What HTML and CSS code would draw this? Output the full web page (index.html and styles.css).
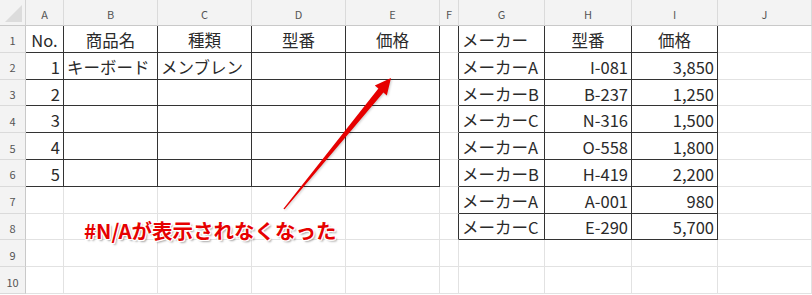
FILE: index.html
```html
<!DOCTYPE html>
<html lang="ja">
<head>
    <meta charset="UTF-8">
    <meta name="viewport" content="width=device-width, initial-scale=1.0">
    <title>商品リスト</title>
    <link rel="stylesheet" href="styles.css">
</head>
<body>
    <div class="wrap">
        <div class="sheet">
            <!-- 列見出し -->
            <div class="corner"></div>
            <div class="col-head">A</div>
            <div class="col-head">B</div>
            <div class="col-head">C</div>
            <div class="col-head">D</div>
            <div class="col-head">E</div>
            <div class="col-head">F</div>
            <div class="col-head">G</div>
            <div class="col-head">H</div>
            <div class="col-head">I</div>
            <div class="col-head">J</div>

            <!-- 1 -->
            <div class="row-head">1</div>
            <div class="cell dark mid">No.</div>
            <div class="cell dark mid">商品名</div>
            <div class="cell dark mid">種類</div>
            <div class="cell dark mid">型番</div>
            <div class="cell dark mid">価格</div>
            <div class="cell edge"></div>
            <div class="cell dark">メーカー</div>
            <div class="cell dark mid">型番</div>
            <div class="cell dark mid">価格</div>
            <div class="cell"></div>

            <!-- 2 -->
            <div class="row-head">2</div>
            <div class="cell dark num">1</div>
            <div class="cell dark">キーボード</div>
            <div class="cell dark">メンブレン</div>
            <div class="cell dark"></div>
            <div class="cell dark"></div>
            <div class="cell edge"></div>
            <div class="cell dark">メーカーA</div>
            <div class="cell dark num">I-081</div>
            <div class="cell dark num">3,850</div>
            <div class="cell"></div>

            <!-- 3 -->
            <div class="row-head">3</div>
            <div class="cell dark num">2</div>
            <div class="cell dark"></div>
            <div class="cell dark"></div>
            <div class="cell dark"></div>
            <div class="cell dark"></div>
            <div class="cell edge"></div>
            <div class="cell dark">メーカーB</div>
            <div class="cell dark num">B-237</div>
            <div class="cell dark num">1,250</div>
            <div class="cell"></div>

            <!-- 4 -->
            <div class="row-head">4</div>
            <div class="cell dark num">3</div>
            <div class="cell dark"></div>
            <div class="cell dark"></div>
            <div class="cell dark"></div>
            <div class="cell dark"></div>
            <div class="cell edge"></div>
            <div class="cell dark">メーカーC</div>
            <div class="cell dark num">N-316</div>
            <div class="cell dark num">1,500</div>
            <div class="cell"></div>

            <!-- 5 -->
            <div class="row-head">5</div>
            <div class="cell dark num">4</div>
            <div class="cell dark"></div>
            <div class="cell dark"></div>
            <div class="cell dark"></div>
            <div class="cell dark"></div>
            <div class="cell edge"></div>
            <div class="cell dark">メーカーA</div>
            <div class="cell dark num">O-558</div>
            <div class="cell dark num">1,800</div>
            <div class="cell"></div>

            <!-- 6 -->
            <div class="row-head">6</div>
            <div class="cell dark num">5</div>
            <div class="cell dark"></div>
            <div class="cell dark"></div>
            <div class="cell dark"></div>
            <div class="cell dark"></div>
            <div class="cell edge"></div>
            <div class="cell dark">メーカーB</div>
            <div class="cell dark num">H-419</div>
            <div class="cell dark num">2,200</div>
            <div class="cell"></div>

            <!-- 7 -->
            <div class="row-head">7</div>
            <div class="cell"></div>
            <div class="cell"></div>
            <div class="cell"></div>
            <div class="cell"></div>
            <div class="cell"></div>
            <div class="cell edge"></div>
            <div class="cell dark">メーカーA</div>
            <div class="cell dark num">A-001</div>
            <div class="cell dark num">980</div>
            <div class="cell"></div>

            <!-- 8 -->
            <div class="row-head">8</div>
            <div class="cell"></div>
            <div class="cell"></div>
            <div class="cell"></div>
            <div class="cell"></div>
            <div class="cell"></div>
            <div class="cell edge"></div>
            <div class="cell dark">メーカーC</div>
            <div class="cell dark num">E-290</div>
            <div class="cell dark num">5,700</div>
            <div class="cell"></div>

            <!-- 9 -->
            <div class="row-head">9</div>
            <div class="cell"></div>
            <div class="cell"></div>
            <div class="cell"></div>
            <div class="cell"></div>
            <div class="cell"></div>
            <div class="cell"></div>
            <div class="cell"></div>
            <div class="cell"></div>
            <div class="cell"></div>
            <div class="cell"></div>

            <!-- 10 -->
            <div class="row-head">10</div>
            <div class="cell"></div>
            <div class="cell"></div>
            <div class="cell"></div>
            <div class="cell"></div>
            <div class="cell"></div>
            <div class="cell"></div>
            <div class="cell"></div>
            <div class="cell"></div>
            <div class="cell"></div>
            <div class="cell"></div>
        </div>

        <!-- 注釈の矢印 -->
        <svg class="arrow" width="812" height="295" viewBox="0 0 812 295">
            <polygon points="283.4,208.7 378.4,88.6 374.8,85.6 391,78 386.8,95.4 383.4,92.4 284.6,209.3" fill="#e60000"/>
        </svg>
        <div class="note">#N/Aが表示されなくなった</div>
    </div>
</body>
</html>
```

FILE: styles.css
```css
body {
    margin: 0;
    padding: 0;
    background-color: #fff;
    overflow: hidden;
    font-family: "Noto Sans CJK JP", "Noto Sans", sans-serif;
}

.wrap {
    position: relative;
    width: 812px;
    height: 295px;
}

.sheet {
    display: grid;
    grid-template-columns: 26px 38px 94px 94px 94px 94px 19px 86px 87px 86px 1fr;
    grid-template-rows: 26px;
    grid-auto-rows: 26.8px;
}

.sheet > div {
    box-sizing: border-box;
}

.corner,
.col-head,
.row-head {
    background-color: #f3f3f3;
    color: #555;
    font-size: 11px;
    display: flex;
    align-items: center;
    justify-content: center;
}

.corner {
    position: relative;
    border-right: 1px solid #d4d4d4;
    border-bottom: 1px solid #c9c9c9;
}

/* 左上の三角 */
.corner::after {
    content: "";
    position: absolute;
    right: 3px;
    bottom: 3px;
    width: 0;
    height: 0;
    border-left: 17px solid transparent;
    border-bottom: 17px solid #dcdcdc;
}

.col-head {
    border-right: 1px solid #dadada;
    border-bottom: 1px solid #c9c9c9;
    padding-top: 2px;
}

.row-head {
    border-right: 1px solid #c9c9c9;
    border-bottom: 1px solid #dadada;
    padding-top: 3px;
}

.cell {
    border-right: 1px solid #e2e2e2;
    border-bottom: 1px solid #e2e2e2;
    font-size: 16.5px;
    color: #2a2a2a;
    display: flex;
    align-items: center;
    padding: 2px 3px 0 3px;
    white-space: nowrap;
    overflow: hidden;
}

.cell.dark {
    border-right-color: #333;
    border-bottom-color: #333;
}

.cell.edge {
    border-right-color: #333;
}

.cell.num {
    justify-content: flex-end;
}

.cell.mid {
    justify-content: center;
    padding-left: 0;
    padding-right: 0;
}

.arrow {
    position: absolute;
    left: 0;
    top: 0;
    filter: drop-shadow(1px 1px 1px rgba(0, 0, 0, 0.2));
}

.note {
    position: absolute;
    left: 84px;
    top: 215px;
    font-size: 20.5px;
    font-weight: bold;
    color: #e60000;
    white-space: nowrap;
    text-shadow:
        1px 0 0 #fff, -1px 0 0 #fff, 0 1px 0 #fff, 0 -1px 0 #fff,
        1px 1px 0 #fff, -1px -1px 0 #fff, 1px -1px 0 #fff, -1px 1px 0 #fff,
        2px 2px 2px rgba(0, 0, 0, 0.35);
}
```
